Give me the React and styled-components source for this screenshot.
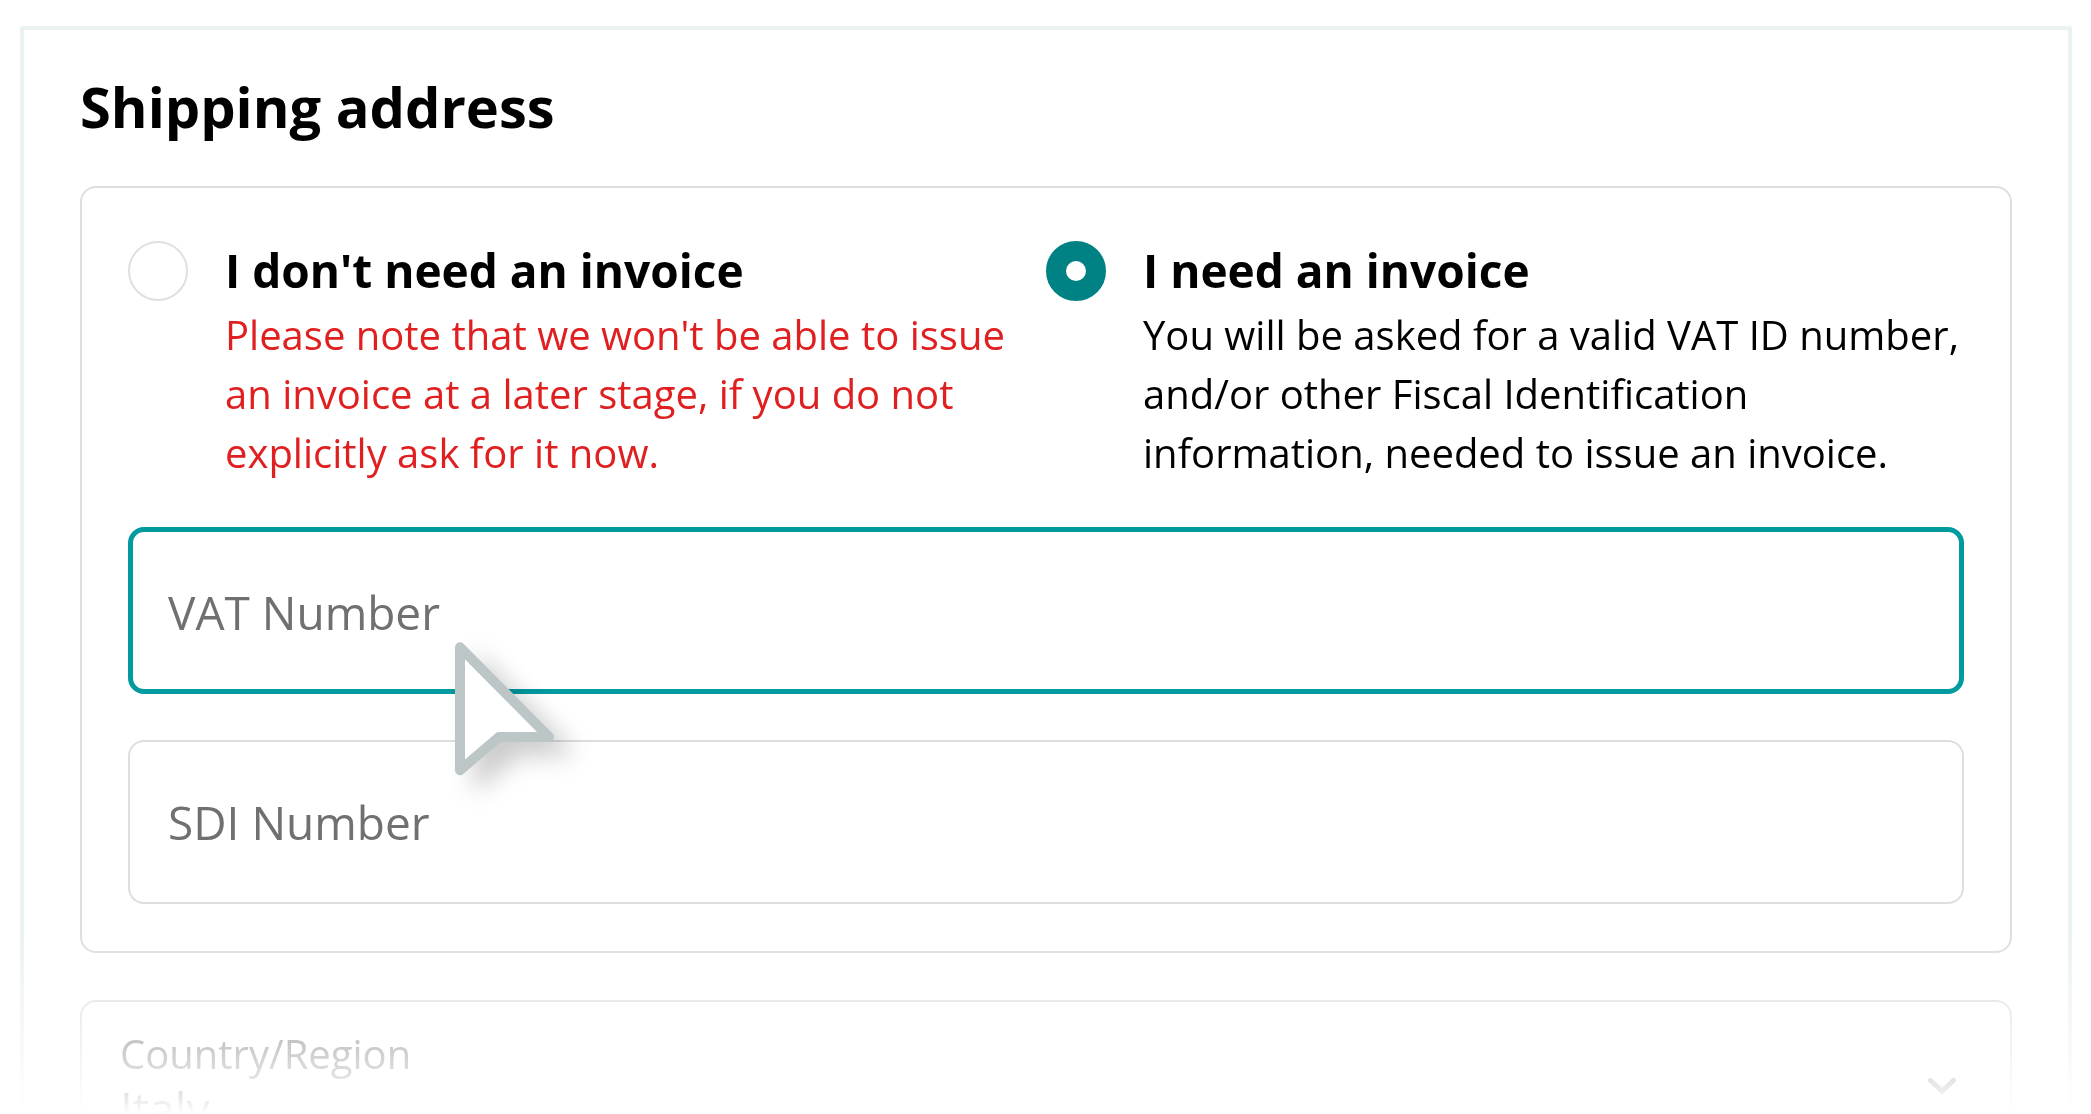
import React, { useState } from "react";
import styled, { createGlobalStyle } from "styled-components";

const GlobalStyle = createGlobalStyle`
  * {
    box-sizing: border-box;
  }
  body {
    margin: 0;
    background: #ffffff;
    color: #000000;
    font-family: "Open Sans", sans-serif;
  }
`;

const Page = styled.div`
  height: 100vh;
  padding: 26px 19px 0 20px;
  overflow: hidden;
`;

const Frame = styled.main`
  height: 100%;
  padding: 38px 56px 0;
  overflow: hidden;
  border: 4px solid #ebf2f2;
  border-bottom: none;
  border-radius: 2px 2px 0 0;
  mask-image: linear-gradient(to top, transparent 0, #000 180px);
`;

const Title = styled.h1`
  margin: 0 0 42px;
  font-size: 56px;
  line-height: 76px;
  font-weight: 700;
`;

const Card = styled.section`
  padding: 53px 46px 47px;
  margin-bottom: 47px;
  border: 2px solid #dedede;
  border-radius: 16px;
`;

const Options = styled.div`
  display: grid;
  grid-template-columns: 1fr 1fr;
  margin-bottom: 45px;
`;

const Option = styled.label`
  display: grid;
  grid-template-columns: 60px 1fr;
  column-gap: 37px;
  align-items: start;
  cursor: pointer;
`;

const Radio = styled.input`
  appearance: none;
  width: 60px;
  height: 60px;
  margin: 0;
  background: #ffffff;
  border: 2px solid #dde1e1;
  border-radius: 50%;
  cursor: pointer;
  &:checked {
    border: 20px solid #008285;
  }
`;

const OptionTitle = styled.span`
  display: block;
  margin-bottom: 6px;
  font-size: 46px;
  line-height: 58px;
  font-weight: 700;
`;

const OptionText = styled.span`
  display: block;
  font-size: 40px;
  line-height: 59px;
  color: ${(props) => (props.$warning ? "#e02020" : "#000000")};
`;

const Fields = styled.div`
  display: flex;
  flex-direction: column;
  gap: 46px;
`;

const Field = styled.div`
  position: relative;
  display: flex;
`;

const TextInput = styled.input`
  width: 100%;
  height: ${(props) => (props.$active ? "167px" : "164px")};
  padding: ${(props) => (props.$active ? "3px 35px 0" : "0 38px")};
  background: transparent;
  border: ${(props) =>
    props.$active ? "5px solid #009a9f" : "2px solid #dedede"};
  border-radius: 16px;
  outline: none;
  font-family: inherit;
  font-size: 46px;
  color: #000000;
  &::placeholder {
    color: #707070;
    opacity: 1;
  }
`;

const Pointer = styled.svg`
  position: absolute;
  top: 110px;
  left: 322px;
  z-index: 1;
  width: 110px;
  height: 140px;
  overflow: visible;
  filter: drop-shadow(18px 14px 12px rgba(0, 0, 0, 0.2));
  pointer-events: none;
`;

const Country = styled.div`
  display: flex;
  align-items: center;
  padding: 26px 54px 54px 38px;
  border: 2px solid #dedede;
  border-radius: 16px;
`;

const CountryValue = styled.div`
  display: flex;
  flex: 1;
  flex-direction: column;
`;

const CountryLabel = styled.label`
  font-size: 40px;
  line-height: 52px;
  color: #707070;
`;

const CountrySelect = styled.select`
  appearance: none;
  height: 56px;
  padding: 0;
  background: transparent;
  border: none;
  font-family: inherit;
  font-size: 46px;
  line-height: 56px;
  color: #000000;
`;

const Chevron = styled.svg`
  align-self: flex-end;
  width: 28px;
  height: 16px;
  margin-bottom: 42px;
`;

function App() {
  const [invoice, setInvoice] = useState("yes");
  return (
    <Page>
      <GlobalStyle />
      <Frame>
        <Title>Shipping address</Title>
        <Card>
          <Options>
            <Option>
              <Radio
                type="radio"
                name="invoice"
                checked={invoice === "no"}
                onChange={() => setInvoice("no")}
              />
              <span>
                <OptionTitle>I don't need an invoice</OptionTitle>
                <OptionText $warning>
                  Please note that we won't be able to issue an invoice at a
                  later stage, if you do not explicitly ask for it now.
                </OptionText>
              </span>
            </Option>
            <Option>
              <Radio
                type="radio"
                name="invoice"
                checked={invoice === "yes"}
                onChange={() => setInvoice("yes")}
              />
              <span>
                <OptionTitle>I need an invoice</OptionTitle>
                <OptionText>
                  You will be asked for a valid VAT ID number, and/or other
                  Fiscal Identification information, needed to issue an
                  invoice.
                </OptionText>
              </span>
            </Option>
          </Options>
          <Fields>
            <Field>
              <TextInput
                $active
                type="text"
                aria-label="VAT Number"
                placeholder="VAT Number"
              />
              <Pointer viewBox="0 0 110 140" aria-hidden="true">
                <path
                  d="M10 10.3 99 100H49L10 133.3Z"
                  fill="#ffffff"
                  stroke="#bdc6c7"
                  strokeWidth="10"
                  strokeLinejoin="round"
                />
              </Pointer>
            </Field>
            <Field>
              <TextInput
                type="text"
                aria-label="SDI Number"
                placeholder="SDI Number"
              />
            </Field>
          </Fields>
        </Card>
        <Country>
          <CountryValue>
            <CountryLabel htmlFor="country">Country/Region</CountryLabel>
            <CountrySelect id="country" defaultValue="Italy">
              <option>Italy</option>
            </CountrySelect>
          </CountryValue>
          <Chevron viewBox="0 0 28 16" aria-hidden="true">
            <path
              d="M2.5 2.5 14 13.2 25.5 2.5"
              fill="none"
              stroke="#707070"
              strokeWidth="5"
              strokeLinecap="round"
            />
          </Chevron>
        </Country>
      </Frame>
    </Page>
  );
}

export default App;
